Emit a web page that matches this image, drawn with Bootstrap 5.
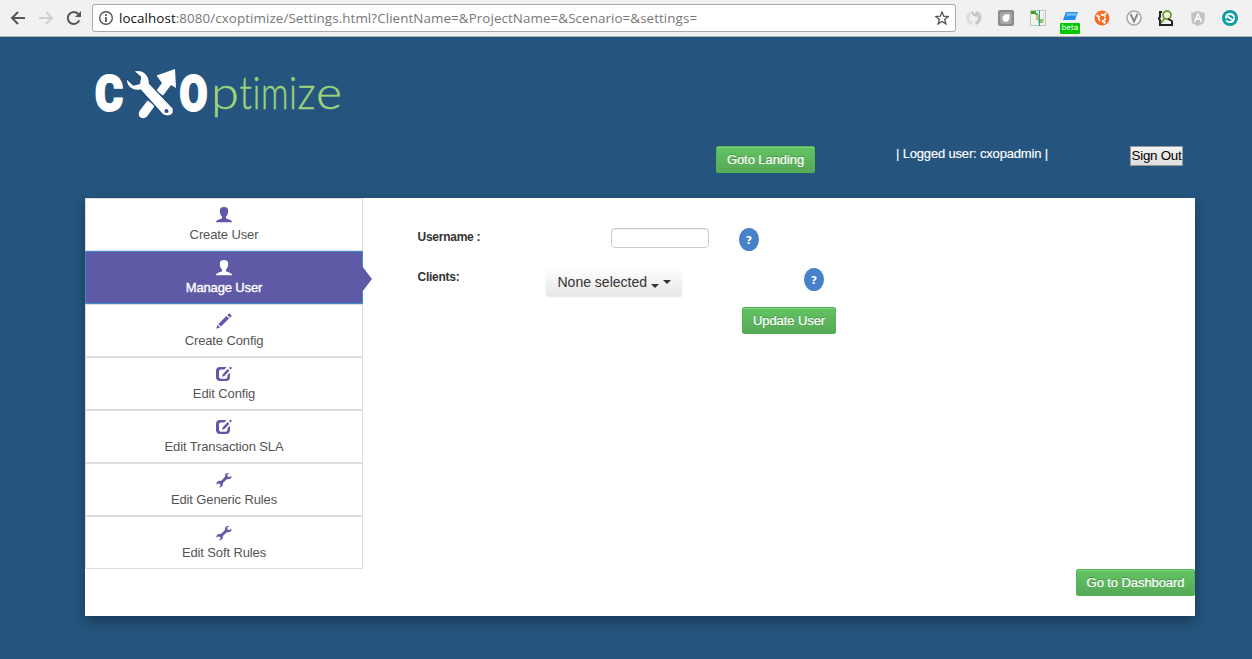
<!DOCTYPE html>
<html lang="en">
<head>
<meta charset="utf-8">
<meta name="viewport" content="width=device-width, initial-scale=1">
<title>CXOptimize Settings</title>
<link href="https://cdn.jsdelivr.net/npm/bootstrap@5.3.0/dist/css/bootstrap.min.css" rel="stylesheet">
<style>
body{font-family:"Liberation Sans",Arial,sans-serif;font-size:13px;line-height:20px;background:#25547e;color:#333;height:659px;overflow:hidden}
svg{display:block;flex:none}
.browser-bar{height:37px;background:#f1f1f1;border-bottom:1px solid #b5b5b5;padding:0 14px 0 10px}
.nav-icons{width:82px;gap:12px}
.address{width:864px;height:28px;background:#fff;border:1px solid #a9a9a9;border-radius:3px;padding:0 6px 0 5px}
.url{font:13.4px/20px "Open Sans","Noto Sans",sans-serif;letter-spacing:.075px;color:#777;margin-left:5px;white-space:nowrap}
.url b{font-weight:400;color:#111}
.ext{gap:16px;margin-left:10px}
.ext-beta{font:400 7.5px/9px "DejaVu Sans",sans-serif;background:#00c800;color:#fff;left:-2px;top:13px;width:20px;height:11px;text-align:center;border-radius:1px}
.page{width:1110px;margin-left:85px}
.brand{height:109px;padding-top:18px}
.toolbar-row{height:52px;color:#fff}
.btn-go{font:13px/18px "Liberation Sans",Arial,sans-serif;letter-spacing:-.08px;color:#fff;height:27px;padding:4px 0 3px;border:1px solid #53b653;border-radius:2px;background:linear-gradient(#62c462,#57a957);box-shadow:inset 0 1px 0 rgba(255,255,255,.2);text-shadow:0 -1px 0 rgba(0,0,0,.25);-webkit-text-stroke:.2px #fff}
.btn-go:hover{color:#fff}
.w-landing{width:99px;margin-left:631px}
.logged{margin-left:81px;margin-top:-2px;width:234px;letter-spacing:-.17px;-webkit-text-stroke:.15px #fff}
.btn-out{width:53px;height:20px;font-size:13.33px;letter-spacing:-.25px;line-height:16px;padding:0;border:1px solid #999;background:linear-gradient(#f4f4f4,#ddd);color:#000;white-space:nowrap}
.panel{height:418px;background:#fff;box-shadow:0 6px 12px rgba(0,0,0,.3)}
.side{width:278px;height:371px}
.side .list-group-item,.side .list-group-item + .list-group-item.active{height:53px;border:1px solid #ddd;margin:0;padding:8px 0 0;color:#555;letter-spacing:-.12px;text-align:center;border-radius:0}
.side .list-group-item svg{margin:0 auto 2px;color:#5f5aa6}
.side .list-group-item + .list-group-item.active{background:#5f5aa6;border-color:#428bca;color:#fff;position:relative;letter-spacing:-.14px;-webkit-text-stroke:.35px #fff}
.side .list-group-item.active svg{color:#fff}
.side .active::after{content:"";position:absolute;left:100%;top:14px;border-left:10px solid #5f5aa6;border-top:13px solid transparent;border-bottom:13px solid transparent}
.form-area{width:832px;padding:30px 0 0 54.5px}
.form-area label{font-weight:700;font-size:12px;letter-spacing:-.25px;line-height:18px;color:#333}
.row-user{height:40px}
.row-client{height:39px}
.user-input{width:98px;height:20px;min-height:0;padding:0;border:1px solid #ccc;border-radius:4px;box-shadow:inset 0 1px 1px rgba(0,0,0,.075)}
.lab-user{width:193.5px}
.lab-client{width:128.5px}
.help-dot{width:20px;height:23px;border-radius:50%;background:#4681c9;color:#fff;font:700 11px/25px "DejaVu Sans",sans-serif;text-align:center}
.gap-user{margin-left:30px}
.gap-client{margin-left:122px}
.multi{width:136px;height:28px;border:0;border-radius:2px;background:linear-gradient(#fff,#e6e6e6);box-shadow:0 1px 2px rgba(0,0,0,.1);font-size:14px;line-height:18px;color:#333;padding:0 0 0 11.500px;text-align:left}
.tri{border-top:4px solid #333;border-left:4px solid transparent;border-right:4px solid transparent}
.w-update{width:94px;margin-left:324.5px}
.w-dash{width:119px}
</style>
</head>
<body>
<svg width="0" height="0" class="position-absolute">
  <symbol id="i-user" viewBox="0 0 16 16"><path fill="currentColor" d="M8 0C5 0 3.700 1.500 3.800 4c.05 2.400.9 4.500 2.200 5.600v1.600L1.200 13.200Q0 13.800 0 15.300h16q0-1.500-1.200-2.100L10 11.200V9.600c1.300-1.100 2.150-3.200 2.200-5.600C12.300 1.500 11 0 8 0Z"/></symbol>
  <symbol id="i-pencil" viewBox="0 0 16 16"><path fill="currentColor" d="m.3 15.700 1.100-3.900 2.700 2.700zM2.300 10.900 10.500 3l2.600 2.600-8.200 8zM11.400 2.100 12.700.8q.6-.6 1.200 0l1.400 1.400q.6.600 0 1.200L14 4.700z"/></symbol>
  <symbol id="i-edit" viewBox="0 0 16 16"><path fill="currentColor" fill-rule="evenodd" d="M4 1h6.500L8.300 3.500H5Q3 3.500 3 5.200v5.600q0 2 2 2h4.500q2 0 2-2V9L14 6.700V11q0 4-4 4H4q-4 0-4-4V5q0-4 4-4Z"/><path fill="currentColor" d="m6 10.800.8-2.600L11.700 3l1.700 1.700L8.500 9.900zM13 2l1-1.100q.5-.4 1 0l.5.500q.5.500 0 1L14.500 3.500z"/></symbol>
  <symbol id="i-wrench" viewBox="0 0 16 16"><path fill="currentColor" d="M15.300 4 13.300 5 11.400 4.600 11.300 2.800 13.300 1.100C10.700.4 8.700 2 8.900 4.900L5 8.900C2.200 8.600.1 10.200.4 12.500l2-1.100 1.800.6.3 1.700L3 15.400c2.700.2 4.300-1.700 3.900-4.300L10.800 7.200C13.600 7.500 16 6.500 15.300 4Z"/></symbol>
</svg>

<header class="browser-bar d-flex align-items-center">
  <div class="nav-icons d-flex">
    <svg width="16" height="16" fill="none" stroke="#555" stroke-width="2"><path d="M15 8H2M8 2 2 8l6 6"/></svg>
    <svg width="16" height="16" fill="none" stroke="#d0d0d0" stroke-width="2"><path d="M1 8h13M8 2l6 6-6 6"/></svg>
    <svg width="16" height="16" fill="none" stroke="#555" stroke-width="2"><path d="M13.300 10.300A6 6 0 1 1 12.300 4"/><path fill="#555" stroke="none" d="M15 1v6H9z"/></svg>
  </div>
  <div class="address d-flex align-items-center">
    <svg width="16" height="16" fill="none" stroke="#555" stroke-width="1.400"><circle cx="8" cy="8" r="6.300"/><path stroke-width="1.800" d="M8 7v5M8 4.200v1.700"/></svg>
    <span class="url"><b>localhost</b>:8080/cxoptimize/Settings.html?ClientName=&amp;ProjectName=&amp;Scenario=&amp;settings=</span>
    <svg class="ms-auto" width="14" height="14" viewBox="0 0 14 14" fill="none" stroke="#555" stroke-width="1.300"><path d="m7 1 1.700 4.200 4.500.3-3.500 2.900 1.200 4.500L7 10.500l-3.900 2.400 1.200-4.500L.8 5.500l4.500-.3z"/></svg>
  </div>
  <div class="ext d-flex">
    <svg width="16" height="16" fill="none"><path stroke="#dedede" stroke-width="3.500" d="M6.500 13.500A5.500 5.500 0 0 1 5 3"/><path stroke="#cacaca" stroke-width="3.500" d="M9.500 2.500Q14.500 4 13.500 9q-.8 3-4 4.500"/><path stroke="#bbb" stroke-width="1.500" d="M6 1.500q1 4 5 4.500"/></svg>
    <svg width="16" height="16"><rect width="16" height="16" rx="2" fill="#8b8b8b"/><rect x="2" y="2" width="12" height="12" rx="2" fill="#a5a5a5"/><path fill="#fff" d="M11.500 4.500q-7-1-7 3.500 0 4 3.500 4 4 0 3.500-7.500Z"/></svg>
    <svg width="16" height="16"><path fill="#f4f4ef" stroke="#bbc9bb" d="M.5.5h15v15H.5z"/><path fill="#479b35" d="M1 1h5v3H1z"/><path fill="#69ae49" d="M5 3h3v2H5z"/><path fill="#d5b666" d="M6 5h3v5H6z"/><path fill="#8cc66b" d="M8 9h5v4H8z"/><path stroke="#18a9b0" d="M9.500 0v16"/><path stroke="#d2dcd2" d="M13.500 3v10"/></svg>
    <div class="position-relative"><svg width="16" height="16"><path fill="#248ceb" d="M4 2h12l-3 8H1z"/><path fill="#6abafa" d="M5 3h10l-1 3Q8 5 4 7z"/></svg><span class="ext-beta position-absolute">beta</span></div>
    <svg width="16" height="16" fill="none"><circle cx="8" cy="8" r="7.500" fill="#f26c24"/><circle cx="8" cy="8" r="3.300" stroke="#fff" stroke-width="1.700" stroke-dasharray="5.400 1.500"/><g fill="#fff"><circle cx="3.500" cy="5.800" r="1.200"/><circle cx="11.500" cy="3.800" r="1.200"/><circle cx="10.500" cy="12.600" r="1.200"/></g></svg>
    <svg width="16" height="16"><circle cx="8" cy="8" r="7" fill="#f8f8f8" stroke="#aaa" stroke-width="1.600"/><path fill="none" stroke="#888" stroke-width="2" d="m4.500 4 3.500 7.500L11.500 4"/></svg>
    <svg width="16" height="16" fill="none"><path stroke="#222" stroke-width="2" d="M4 2H2v5L.7 8.500 2 10v5h12v-3"/><circle cx="9" cy="5" r="4" fill="#edf5df" stroke="#6a9c37" stroke-width="1.800"/><path stroke="#6a9c37" stroke-width="2" d="m7 8-4 5"/><path stroke="#222" stroke-width="1.800" d="m10 9 4 2v4"/></svg>
    <svg width="16" height="16"><path fill="#c2c2c2" d="m8 1 7 2-1 10-6 3-6-3L1 3z"/><path fill="none" stroke="#fff" stroke-width="1.500" d="m4.500 12 3.500-8 3.500 8M6 9h4"/></svg>
    <svg width="16" height="16" fill="none"><circle cx="8" cy="8" r="8" fill="#119ba4"/><path stroke="#fff" stroke-width="1.800" d="M4 8.500Q3.800 4 8 4q3 0 4.500 3.500M12 8q0 4.200-4 4.200-2.500 0-4-2M5.500 6.500l5 3.500"/></svg>
  </div>
</header>

<div class="page">
  <div class="brand">
    <svg width="270" height="75" viewBox="85 55 270 75">
      <g fill="#fff" stroke="#fff" stroke-width="2" font-family="Roboto" font-weight="900" font-size="50.500">
        <text x="95" y="111" textLength="28" lengthAdjust="spacingAndGlyphs">C</text>
        <text x="179.500" y="111" textLength="28" lengthAdjust="spacingAndGlyphs">O</text>
      </g>
      <path fill="#fff" d="m139.500 111 8-10.500 7.500 5-8 11q-3 3-6.500 1-3-2.500-1-6.500ZM156 91l6-8-5.500-7.500L175 69l1 19-5-3-8 10.500z"/>
      <path fill="#fff" stroke="#1f4c76" stroke-width="1.200" d="m133.500 71 7 6-1 6.500-6 1.500-7-6.500c-1 8 6 13.500 14 11.500l22 24.500c6 3.500 13 .5 10.500-6.500l-23.500-24.500c0-9-6-15-16-12.500Z"/>
      <circle cx="166.500" cy="111" r="2" fill="#25547e"/>
      <g fill="#9bd27a" stroke="#9bd27a" stroke-width=".45" font-family="Lato" font-weight="300" font-size="45.500">
        <text x="211" y="109" textLength="28" lengthAdjust="spacingAndGlyphs">p</text>
        <text x="239.500" y="109" textLength="12.500" lengthAdjust="spacingAndGlyphs">t</text>
        <text x="252.500" y="109" textLength="8" lengthAdjust="spacingAndGlyphs">i</text>
        <text x="261" y="109" textLength="27.500" lengthAdjust="spacingAndGlyphs">m</text>
        <text x="289" y="109" textLength="8" lengthAdjust="spacingAndGlyphs">i</text>
        <text x="297.500" y="109" textLength="18" lengthAdjust="spacingAndGlyphs">z</text>
        <text x="316" y="109" textLength="26" lengthAdjust="spacingAndGlyphs">e</text>
      </g>
    </svg>
  </div>
  <div class="toolbar-row d-flex align-items-start">
    <button class="btn btn-go w-landing">Goto Landing</button>
    <div class="logged">| Logged user: cxopadmin |</div>
    <button class="btn-out">Sign Out</button>
  </div>

  <main class="panel">
    <div class="d-flex">
      <nav class="list-group side rounded-0">
        <a class="list-group-item"><svg width="16" height="16"><use href="#i-user"/></svg>Create User</a>
        <a class="list-group-item active"><svg width="16" height="16"><use href="#i-user"/></svg>Manage User</a>
        <a class="list-group-item"><svg width="16" height="16"><use href="#i-pencil"/></svg>Create Config</a>
        <a class="list-group-item"><svg width="16" height="16"><use href="#i-edit"/></svg>Edit Config</a>
        <a class="list-group-item"><svg width="16" height="16"><use href="#i-edit"/></svg>Edit Transaction SLA</a>
        <a class="list-group-item"><svg width="16" height="16"><use href="#i-wrench"/></svg>Edit Generic Rules</a>
        <a class="list-group-item"><svg width="16" height="16"><use href="#i-wrench"/></svg>Edit Soft Rules</a>
      </nav>
      <section class="form-area">
        <div class="row-user d-flex align-items-start">
          <label class="lab-user" for="username">Username :</label>
          <input id="username" class="form-control user-input" type="text">
          <span class="help-dot gap-user">?</span>
        </div>
        <div class="row-client d-flex align-items-start">
          <label class="lab-client">Clients:</label>
          <button class="multi d-flex align-items-center">None selected<i class="tri ms-1 mt-2"></i><i class="tri ms-1"></i></button>
          <span class="help-dot gap-client">?</span>
        </div>
        <button class="btn btn-go w-update">Update User</button>
      </section>
    </div>
    <div class="d-flex justify-content-end"><button class="btn btn-go w-dash">Go to Dashboard</button></div>
  </main>
</div>
</body>
</html>
